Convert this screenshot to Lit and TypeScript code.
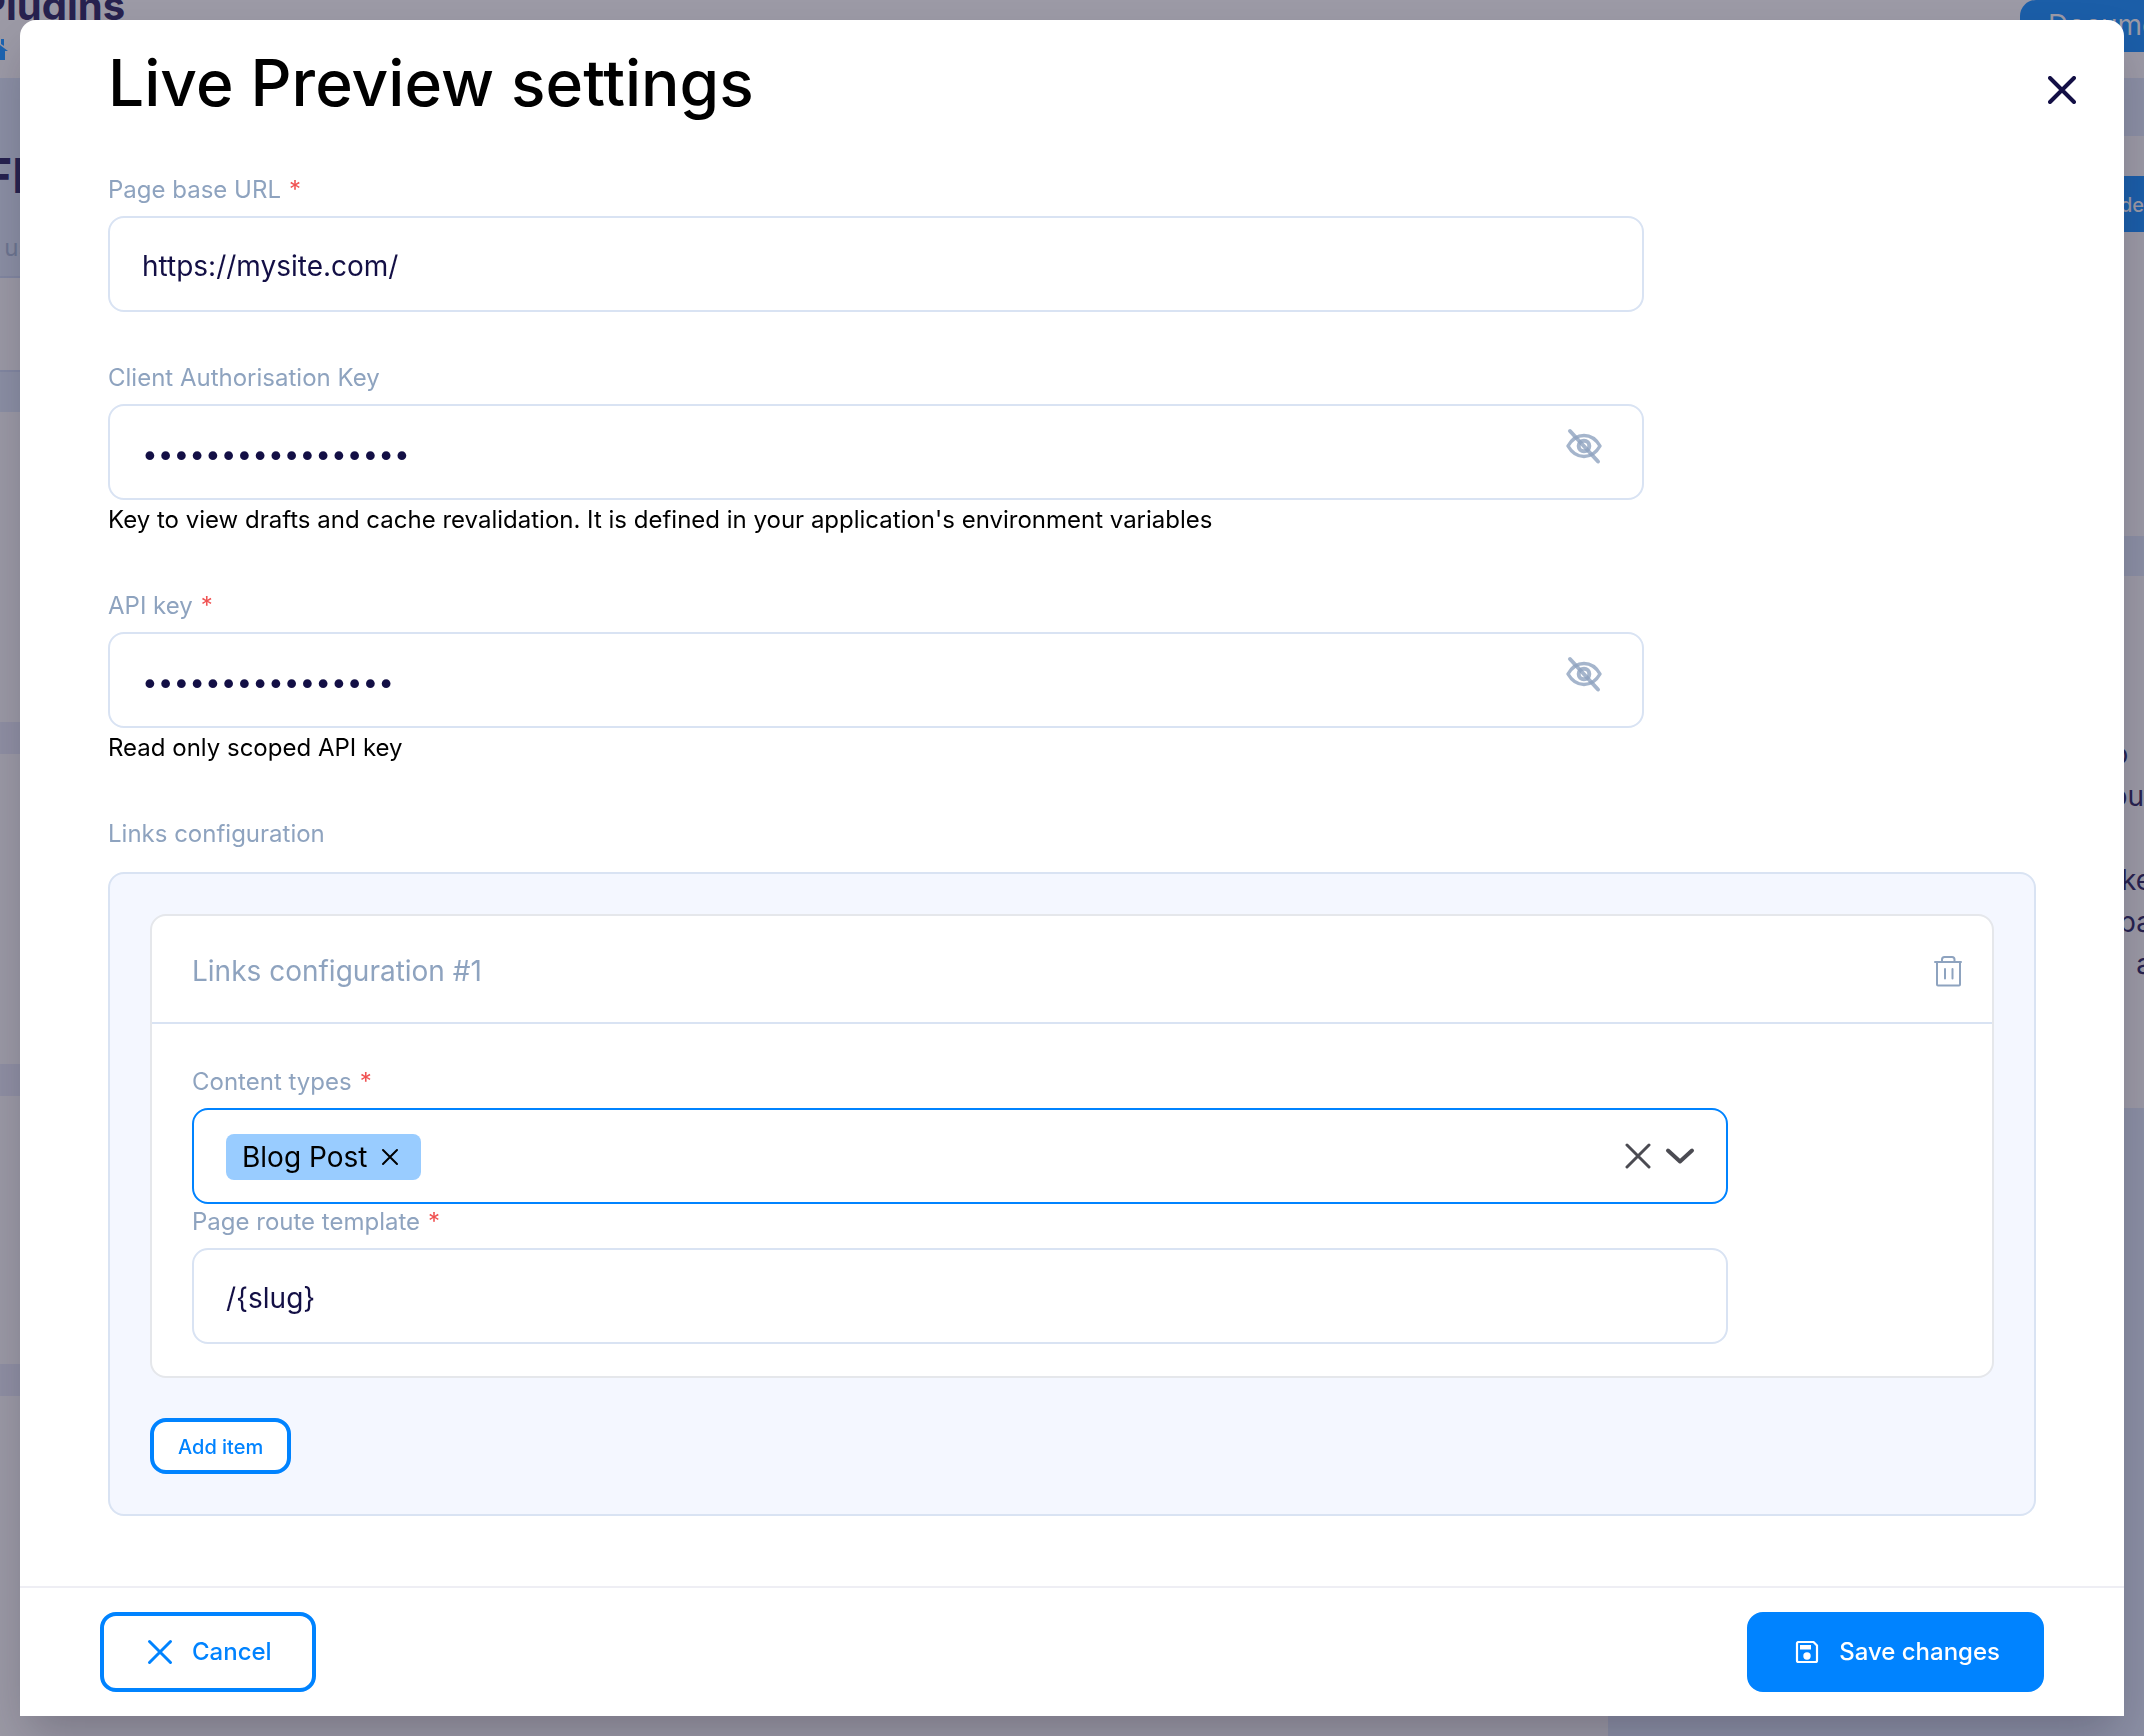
import { LitElement, html, css, svg, nothing } from "lit";
import { customElement, state } from "lit/decorators.js";

const cross = (size: number, width: number) => html`
  <svg class="icon" width=${size} height=${size} viewBox="0 0 ${size} ${size}" aria-hidden="true">
    ${svg`<path d="M2 2L${size - 2} ${size - 2}M${size - 2} 2L2 ${size - 2}" fill="none"
      stroke="currentColor" stroke-width=${width} stroke-linecap="round" />`}
  </svg>
`;

const hiddenEye = html`
  <svg class="icon" width="40" height="40" viewBox="0 0 40 40" aria-hidden="true">
    <g fill="none" stroke="#8ea3bf" stroke-opacity="0.8" stroke-width="4" stroke-linecap="round" stroke-linejoin="round">
      <path d="M4 20C8 13 14 9.500 20 9.500S32 13 36 20C32 27 26 30.500 20 30.500S8 27 4 20Z" stroke-width="3.500" />
      <circle cx="20" cy="20" r="5.300" />
      <path d="M6 5L34 35.500" />
    </g>
  </svg>
`;

const trash = html`
  <svg class="icon" width="32" height="36" viewBox="0 0 32 36" aria-hidden="true">
    <g fill="none" stroke="currentColor" stroke-width="2" stroke-linecap="round" stroke-linejoin="round">
      <path d="M3 9H29" />
      <path d="M5 9V31.500Q5 32.500 6 32.500H27Q28 32.500 28 31.500V9" />
      <path d="M10 9V6.500Q10 4 12.500 4H20Q22.500 4 22.500 6.500V9" />
      <path d="M13 16V25.500M20.500 16V25.500" />
    </g>
  </svg>
`;

const chevron = html`
  <svg class="icon" width="32" height="32" viewBox="0 0 32 32" aria-hidden="true">
    <path d="M4 10.500L16 21.500L28 10.500" fill="none" stroke="currentColor" stroke-width="4"
      stroke-linecap="round" stroke-linejoin="round" />
  </svg>
`;

const floppy = html`
  <svg class="icon" width="32" height="32" viewBox="0 0 32 32" aria-hidden="true">
    <path d="M6.500 6H22.500L26 9.500V24.500Q26 26 24.500 26H7.500Q6 26 6 24.500V7.500Q6 6 7.500 6" fill="none"
      stroke="currentColor" stroke-width="2.200" stroke-linejoin="round" />
    <path d="M9 9H20V13.500H9Z" fill="currentColor" />
    <circle cx="16" cy="20" r="3.700" fill="currentColor" />
  </svg>
`;

const house = html`
  <svg class="icon" width="32" height="24" viewBox="0 0 32 24" aria-hidden="true">
    <path d="M16 1L32 13H29V22H19V15H13V22H3V13H0ZM25 1H28V8L25 6Z" fill="currentColor" />
  </svg>
`;

@customElement("backdrop-page")
export class BackdropPage extends LitElement {
  static styles = css`
    :host {
      display: block;
      height: 100vh;
      overflow: hidden;
      background: #8b8fa4;
      color: #27224f;
      font-family: Inter, "Liberation Sans", sans-serif;
    }
    .icon {
      display: block;
    }
    .bar {
      display: flex;
      justify-content: space-between;
      height: 78px;
      background: #9c9aa6;
    }
    .brand {
      margin-left: -24px;
    }
    .name {
      margin: -18px 0 8px 4px;
      font-size: 40px;
      line-height: 48px;
      font-weight: 700;
    }
    .home {
      display: block;
      width: 32px;
      color: #1c63b0;
    }
    .docs {
      width: 220px;
      height: 52px;
      padding: 0 0 2px 28px;
      margin-right: -96px;
      border: 0;
      border-radius: 16px 16px 0 0;
      background: #1b5ea8;
      color: #9c9aa6;
      font: 400 28px/48px Inter, sans-serif;
      text-align: left;
    }
    .columns {
      display: grid;
      grid-template-columns: 3fr 1fr;
    }
    .hero {
      height: 200px;
      box-sizing: border-box;
      border-bottom: 2px solid #8287a1;
    }
    .heading {
      margin: 0 0 0 -16px;
      padding-top: 52px;
      font-size: 48px;
      line-height: 56px;
      font-weight: 700;
      padding-top: 70px;
      margin-left: -16px;
    }
    .note {
      margin: 28px 0 0 -16px;
      font-size: 24px;
      line-height: 32px;
      color: #6d7590;
    }
    .tabs {
      height: 92px;
      border-bottom: 2px solid #8287a1;
      background: #9b99a5;
      margin-bottom: 40px;
    }
    .cards {
      display: flex;
      flex-direction: column;
      gap: 32px;
      background: #8f8fa3;
    }
    .card {
      background: #9b99a5;
    }
    .tall {
      height: 310px;
    }
    .short {
      height: 268px;
    }
    .last {
      height: 400px;
    }
    .side {
      padding-top: 58px;
    }
    .install {
      height: 400px;
      padding-top: 40px;
      box-sizing: border-box;
      background: #9b99a5;
      margin-bottom: 40px;
    }
    .action {
      display: block;
      width: 100%;
      height: 56px;
      padding: 0;
      border: 0;
      background: #1b5ea8;
      color: #9c9aa6;
      font: 500 20px/58px Inter, sans-serif;
      text-align: right;
    }
    .about {
      height: 532px;
      box-sizing: border-box;
      overflow: hidden;
      padding-top: 157px;
      background: #9b99a5;
      font-size: 28px;
      line-height: 42px;
      text-align: right;
    }
    .about p {
      margin: 0;
    }
    .more {
      padding-top: 42px;
      margin-right: -8px;
    }
  `;

  render() {
    return html`
      <header class="bar">
        <div class="brand">
          <p class="name">Plugins</p>
          <a class="home" href="#home" aria-label="Home">${house}</a>
        </div>
        <button class="docs" type="button">Documentation</button>
      </header>
      <div class="columns">
        <div>
          <section class="hero">
            <h2 class="heading">Fl</h2>
            <p class="note">y us</p>
          </section>
          <div class="tabs"></div>
          <div class="cards">
            <div class="card tall"></div>
            <div class="card tall"></div>
            <div class="card short"></div>
            <div class="card last"></div>
          </div>
        </div>
        <aside class="side">
          <div class="install"><button class="action" type="button">de</button></div>
          <div class="about">
            <p>o&nbsp;&nbsp;</p>
            <p>ou</p>
            <div class="more">
              <p>ke</p>
              <p>pa</p>
              <p>a</p>
            </div>
          </div>
        </aside>
      </div>
    `;
  }
}

@customElement("app-root")
export class AppRoot extends LitElement {
  @state() private tags = ["Blog Post"];
  @state() private shown: Record<string, boolean> = {};

  static styles = css`
    :host {
      display: block;
      font-family: Inter, "Liberation Sans", sans-serif;
      color: #000;
    }
    button {
      font-family: inherit;
      cursor: pointer;
    }
    .icon {
      display: block;
      flex: none;
    }
    .overlay {
      position: fixed;
      inset: 0;
      display: flex;
      padding: 20px;
      box-sizing: border-box;
    }
    .modal {
      flex: 1;
      min-width: 0;
      display: flex;
      flex-direction: column;
      background: #fff;
      border-radius: 16px 16px 0 0;
      box-shadow: 0 24px 48px -8px rgba(20, 16, 40, 0.25);
    }
    .top {
      display: flex;
      justify-content: space-between;
      align-items: flex-end;
      padding: 24px 40px 0 88px;
    }
    .title {
      margin: 0;
      font-size: 64px;
      line-height: 78px;
      font-weight: 500;
    }
    .plain {
      display: flex;
      align-items: center;
      justify-content: center;
      padding: 0;
      border: 0;
      background: none;
      color: inherit;
    }
    .close {
      width: 44px;
      height: 64px;
      color: #130f45;
    }
    .content {
      flex: 1;
      min-height: 0;
      overflow: auto;
      padding: 50px 88px 0;
    }
    .field {
      max-width: 1536px;
    }
    .spaced {
      margin-bottom: 48px;
    }
    .label {
      display: block;
      font-size: 24px;
      line-height: 36px;
      margin-bottom: 8px;
      color: #8ea3bf;
    }
    .star {
      margin-left: 8px;
      color: #f05252;
    }
    .control {
      position: relative;
    }
    .input {
      display: block;
      width: 100%;
      height: 96px;
      box-sizing: border-box;
      padding: 4px 32px 0;
      border: 2px solid #d9e3f3;
      border-radius: 16px;
      background: #fff;
      color: #130f45;
      font-family: inherit;
      font-size: 28px;
      outline: none;
    }
    .eye {
      position: absolute;
      top: 22px;
      right: 40px;
    }
    .help {
      margin: 0;
      font-size: 24px;
      line-height: 40px;
    }
    .group {
      margin: 0;
      padding: 40px;
      border: 2px solid #d9e3f3;
      border-radius: 16px;
      background: #f4f7ff;
    }
    .grouplabel {
      margin-bottom: 20px;
    }
    .item {
      border: 2px solid #e5e7eb;
      border-radius: 16px;
      background: #fff;
      margin-bottom: 40px;
    }
    .itemhead {
      display: flex;
      align-items: center;
      justify-content: space-between;
      height: 102px;
      padding: 4px 28px 0 40px;
      border-bottom: 2px solid #d9e3f3;
      color: #8ea3bf;
    }
    .itemtitle {
      margin: 0;
      font-size: 28px;
      line-height: 40px;
      font-weight: 400;
    }
    .itembody {
      padding: 40px 40px 32px;
    }
    .select {
      display: flex;
      align-items: center;
      height: 96px;
      box-sizing: border-box;
      padding: 0 30px 0 32px;
      border: 2px solid #0083ff;
      border-radius: 16px;
      gap: 13px;
      color: #4b4b52;
    }
    .tag {
      display: flex;
      align-items: center;
      gap: 14px;
      height: 46px;
      padding: 0 22px 0 16px;
      margin-top: 2px;
      border-radius: 8px;
      background: #99ccff;
      color: #000;
      font-size: 28px;
      line-height: 48px;
    }
    .search {
      flex: 1;
      min-width: 0;
      border: 0;
      outline: none;
      background: none;
      font: 400 28px/40px Inter, sans-serif;
    }
    .button {
      display: flex;
      align-items: center;
      gap: 16px;
      height: 80px;
      padding: 0 40px 1px;
      border: 4px solid #0083ff;
      border-radius: 16px;
      background: #fff;
      color: #0083ff;
      font-size: 24px;
      font-weight: 500;
    }
    .primary {
      background: #0083ff;
      color: #fff;
    }
    .small {
      height: 56px;
      padding: 1px 24px 0;
      font-size: 20px;
    }
    .bottom {
      display: flex;
      justify-content: space-between;
      padding: 24px 80px;
      border-top: 2px solid #eeeef4;
    }
  `;

  private label(id: string, text: string, required: boolean) {
    return html`<label class="label" for=${id}
      >${text}${required ? html`<span class="star">*</span>` : nothing}</label
    >`;
  }

  private secret(id: string, text: string, value: string, help: string, required: boolean) {
    return html`
      <div class="field spaced">
        ${this.label(id, text, required)}
        <div class="control">
          <input class="input" id=${id} type=${this.shown[id] ? "text" : "password"} .value=${value}
            autocomplete="off" />
          <button class="plain eye" type="button" aria-label="Show ${text}"
            @click=${() => (this.shown = { ...this.shown, [id]: !this.shown[id] })}>
            ${hiddenEye}
          </button>
        </div>
        <p class="help">${help}</p>
      </div>
    `;
  }

  render() {
    return html`
      <backdrop-page></backdrop-page>
      <div class="overlay">
        <div class="modal" role="dialog" aria-labelledby="title">
          <header class="top">
            <h1 class="title" id="title">Live Preview settings</h1>
            <button class="plain close" type="button" aria-label="Close">${cross(28, 4)}</button>
          </header>
          <main class="content">
            <div class="field spaced">
              ${this.label("url", "Page base URL", true)}
              <input class="input" id="url" type="text" value="https://mysite.com/" />
            </div>
            ${this.secret(
              "auth",
              "Client Authorisation Key",
              "authorisationkey1",
              "Key to view drafts and cache revalidation. It is defined in your application's environment variables",
              false
            )}
            ${this.secret("api", "API key", "readonlyapikey01", "Read only scoped API key", true)}
            <div class="label grouplabel" id="links">Links configuration</div>
            <section class="group" aria-labelledby="links">
              <article class="item">
                <header class="itemhead">
                  <h2 class="itemtitle">Links configuration #1</h2>
                  <button class="plain" type="button" aria-label="Delete item">${trash}</button>
                </header>
                <div class="itembody">
                  <div class="field">
                    ${this.label("types", "Content types", true)}
                    <div class="select">
                      ${this.tags.map(
                        (tag) => html`<span class="tag"
                          >${tag}<button class="plain" type="button" aria-label="Remove ${tag}"
                            @click=${() => (this.tags = this.tags.filter((t) => t !== tag))}>
                            ${cross(18, 2)}
                          </button></span
                        >`
                      )}
                      <input class="search" id="types" type="text" role="combobox" aria-expanded="false" />
                      <button class="plain" type="button" aria-label="Clear" @click=${() => (this.tags = [])}>
                        ${cross(26, 3)}
                      </button>
                      <button class="plain" type="button" aria-label="Open">${chevron}</button>
                    </div>
                  </div>
                  <div class="field">
                    ${this.label("route", "Page route template", true)}
                    <input class="input" id="route" type="text" value="/{slug}" />
                  </div>
                </div>
              </article>
              <button class="button small" type="button">Add item</button>
            </section>
          </main>
          <footer class="bottom">
            <button class="button" type="button">
              <svg class="icon" width="32" height="32" viewBox="0 0 32 32" aria-hidden="true">
                <path d="M5.500 5.500L26.500 26.500M26.500 5.500L5.500 26.500" fill="none" stroke="currentColor"
                  stroke-width="3" stroke-linecap="round" />
              </svg>
              Cancel
            </button>
            <button class="button primary" type="button">${floppy} Save changes</button>
          </footer>
        </div>
      </div>
    `;
  }
}
